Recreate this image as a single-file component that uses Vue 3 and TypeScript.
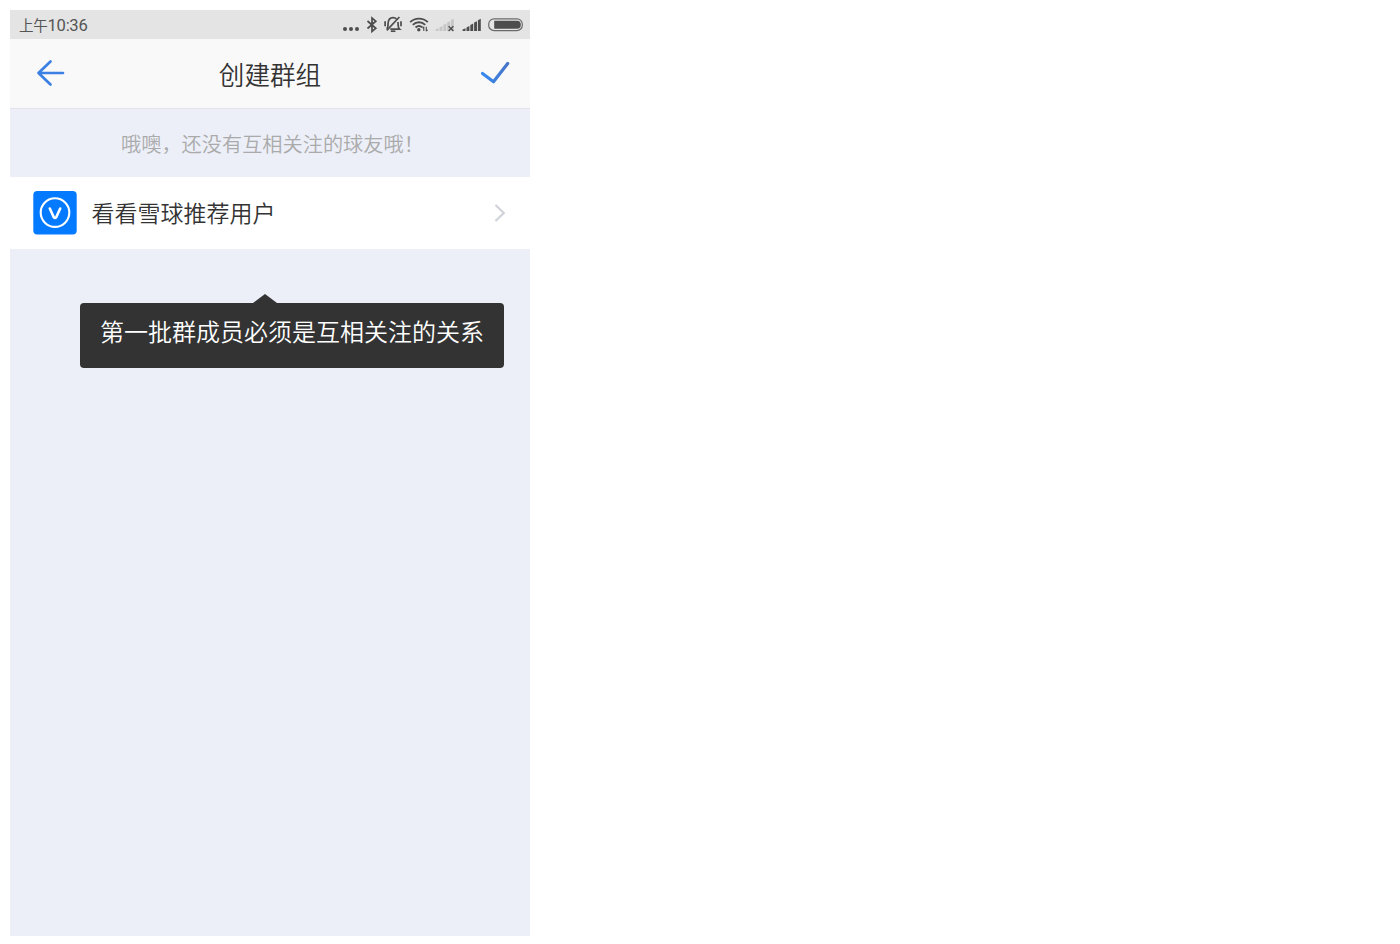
<template>
  <div class="screen">
    <header class="status-bar">
      <span class="clock"><span class="period">上午</span>{{ clock }}</span>
      <div class="status-icons">
        <svg class="dots" width="16" height="30" viewBox="0 0 16 30">
          <circle cx="2" cy="19" r="2" />
          <circle cx="8" cy="19" r="2" />
          <circle cx="14" cy="19" r="2" />
        </svg>
        <!-- bluetooth -->
        <svg class="bluetooth" width="12" height="30" viewBox="0 0 12 30">
          <path d="M1.5 11 L9.8 18.3 L6 21.5 V8 L9.8 11.2 L1.5 18.5" />
        </svg>
        <!-- muted bell -->
        <svg class="bell" width="18" height="30" viewBox="0 0 18 30">
          <path d="M2.6 18.8 C4.4 17.8 3.9 16 4.1 13 C4.4 9.5 6 7.7 9 7.7 C10.5 7.7 11.6 8.1 12.5 9 M14 12 C14.2 15.5 13.8 17.8 15.5 19.2 H6.3" />
          <path d="M6.8 21.2 H11.4" />
          <path d="M15.4 7 L2.8 20.4" />
          <path d="M1.1 11.2 V16.2 M17 11.2 V16.2" />
        </svg>
        <!-- wifi -->
        <svg class="wifi" width="20" height="30" viewBox="0 0 20 30">
          <path d="M1.2 12.2 C6 7.4 14 7.4 18.8 12.2" />
          <path d="M3.8 14.9 C7.4 11.4 12.6 11.4 16.2 14.9" />
          <path d="M6.5 17.5 C8.7 15.5 11.2 15.5 13.3 17.3" />
          <circle cx="9.8" cy="19.7" r="1.7" />
          <path class="thin" d="M14.8 16.8 V21 M17.3 16.8 V21.2 M13.5 18.2 L14.8 16.8 M18.6 19.8 L17.3 21.2" />
        </svg>
        <!-- first sim, no service -->
        <svg class="signal-off" width="20" height="30" viewBox="0 0 20 30">
          <path v-for="b in bars" :key="b.x" class="bar" :d="barPath(b)" />
          <path class="cross" d="M13.6 16.2 L18.4 21 M18.4 16.2 L13.6 21" />
        </svg>
        <!-- second sim -->
        <svg class="signal" width="20" height="30" viewBox="0 0 20 30">
          <path v-for="b in bars" :key="b.x" :d="barPath(b)" />
        </svg>
        <svg class="battery" width="36" height="30" viewBox="0 0 36 30">
          <rect class="shell" x="0.7" y="8.8" width="33.6" height="11.8" rx="5.4" />
          <path d="M6.2 10.8 H29 Q32.8 10.8 32.8 14.8 Q32.8 18.8 29 18.8 H6.2 Z" />
        </svg>
      </div>
    </header>

    <nav class="nav-bar">
      <svg class="back" width="30" height="30" viewBox="0 0 30 30">
        <path d="M15.5 3.5 L3.5 15 L15.5 26.5 M3.5 15 H28" />
      </svg>
      <h1 class="title">创建群组</h1>
      <svg class="confirm" width="32" height="30" viewBox="0 0 32 30">
        <defs>
          <linearGradient id="tick" x1="0" y1="0" x2="1" y2="0">
            <stop offset="0" stop-color="#3589ee" />
            <stop offset="1" stop-color="#4775c8" />
          </linearGradient>
        </defs>
        <path d="M3.5 15.5 L14.5 23.8 L28.7 5.5" stroke="url(#tick)" />
      </svg>
    </nav>

    <p class="hint">哦噢，还没有互相关注的球友哦！</p>

    <div class="row">
      <svg class="badge" width="44" height="44" viewBox="0 0 44 44">
        <rect x="0.3" width="43.4" height="43.4" rx="4" fill="#037aff" />
        <circle cx="22" cy="21.6" r="14.3" />
        <path d="M16.8 17.5 L20.8 26.3 Q22 27.8 23.2 26.3 L27.2 17.5" />
      </svg>
      <span class="row-label">看看雪球推荐用户</span>
      <svg class="chevron" width="12" height="20" viewBox="0 0 12 20">
        <path d="M1.5 2 L9.8 10 L1.5 18" />
      </svg>
    </div>

    <div class="tooltip">第一批群成员必须是互相关注的关系</div>
  </div>
</template>

<script setup lang="ts">
import { ref } from 'vue'

interface Bar {
  x: number
  h: number
}

const clock = ref('10:36')

const bars: Bar[] = [
  { x: 0.6,  h: 2.4  },
  { x: 4.5,  h: 4.6  },
  { x: 8.3,  h: 7    },
  { x: 12.1, h: 9.4  },
  { x: 15.9, h: 11.8 },
]

// bars sit on a common baseline and have a sloped top edge
function barPath(b: Bar): string {
  const base = 21
  return `M${b.x} ${base} V${base - b.h + 1} L${b.x + 2.9} ${base - b.h - 0.4} V${base} Z`
}
</script>

<style>
body {
  background: #fff;
}
</style>

<style scoped>
.screen {
  width: 520px;
  height: 926px;
  margin: 10px;
  background: #eceff8;
  font-family: "Noto Sans CJK SC", sans-serif;
  font-weight: 350;
  color: #333;
}

svg {
  display: block;
  flex: none;
}

.status-bar {
  display: flex;
  align-items: center;
  justify-content: space-between;
  height: 29px;
  padding: 0 6px 0 9px;
  background: #e4e4e4;
}

.clock {
  padding-top: 2px;
  font-family: Roboto, "Noto Sans CJK SC", sans-serif;
  font-size: 16.6px;
  font-weight: 400;
  line-height: 29px;
  letter-spacing: -0.3px;
  color: #555;
}

.period {
  font-size: 14.6px;
}

.status-icons {
  display: flex;
  align-items: center;
  fill: #4d4d4d;
}

.bluetooth {
  margin-left: 7px;
}

.bell {
  margin-left: 6px;
}

.wifi {
  margin-left: 7px;
}

.signal-off {
  margin-left: 6px;
}

.signal {
  margin-left: 7px;
}

.battery {
  margin-left: 6px;
}

.bluetooth path,
.bell path,
.wifi path {
  fill: none;
  stroke: #4d4d4d;
  stroke-width: 1.7;
}

.wifi path {
  stroke-width: 1.9;
}

.wifi .thin {
  stroke-width: 1.1;
}

.signal-off .bar {
  fill: #c6c6c6;
}

.signal-off .cross {
  stroke: #4d4d4d;
  stroke-width: 1.3;
}

.battery .shell {
  fill: none;
  stroke: #6a6a6a;
  stroke-width: 1.2;
}

.nav-bar {
  display: flex;
  align-items: center;
  justify-content: space-between;
  box-sizing: border-box;
  height: 70px;
  padding: 0 19px 1px 25px;
  background: #f9f9f9;
  border-bottom: 1px solid #e2e4e9;
}

.nav-bar svg {
  fill: none;
  stroke-linecap: round;
  stroke-linejoin: round;
}

.back {
  stroke: #3b80e2;
  stroke-width: 2.7;
}

.confirm {
  stroke-width: 3.2;
}

.title {
  margin: 2px 4px 0 0;
  font-size: 25.6px;
  font-weight: 350;
  line-height: 36px;
}

.hint {
  height: 68px;
  margin: 0;
  padding-left: 111px;
  font-size: 20.2px;
  line-height: 69px;
  color: #aaa;
}

.row {
  display: flex;
  align-items: center;
  height: 72px;
  padding: 0 24px 0 23px;
  background: #fff;
}

.badge circle,
.badge path {
  fill: none;
  stroke: #fff;
  stroke-width: 2.1;
}

.badge path {
  stroke-width: 2.6;
  stroke-linecap: round;
}

.row-label {
  flex: 1;
  margin-left: 14.5px;
  padding-bottom: 3px;
  font-size: 23px;
}

.chevron {
  fill: none;
  stroke: #d0d3d9;
  stroke-width: 2.2;
}

.tooltip {
  position: relative;
  box-sizing: border-box;
  width: 424px;
  height: 65px;
  margin: 54px 0 0 70px;
  padding-left: 20px;
  border-radius: 4px;
  background: #333;
  font-size: 24px;
  line-height: 56px;
  white-space: nowrap;
  color: #fff;
}

.tooltip::before {
  content: "";
  position: absolute;
  top: -9px;
  left: 173px;
  border: solid transparent;
  border-width: 0 12px 9px;
  border-bottom-color: #333;
}
</style>
